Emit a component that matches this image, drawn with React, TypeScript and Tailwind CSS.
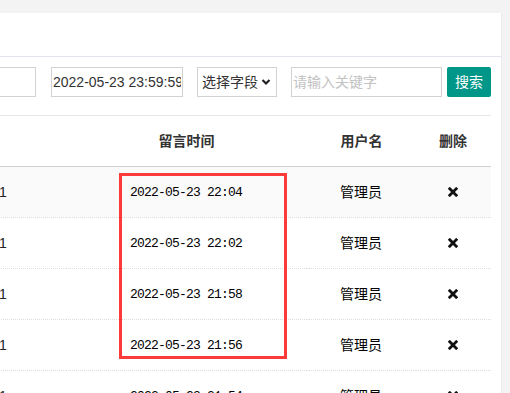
import React from "react";

type Row = { id: string; time: string; user: string };

const rows: Row[] = [
  { id: "1", time: "2022-05-23 22:04", user: "管理员" },
  { id: "1", time: "2022-05-23 22:02", user: "管理员" },
  { id: "1", time: "2022-05-23 21:58", user: "管理员" },
  { id: "1", time: "2022-05-23 21:56", user: "管理员" },
  { id: "1", time: "2022-05-23 21:54", user: "管理员" },
];

const sans = "font-['Liberation_Sans','Noto_Sans_CJK_SC',sans-serif]";

const CloseIcon = () => (
  <svg width="10" height="10" viewBox="0 0 10 10">
    <path d="M1.8 1.8 L8.2 8.2 M8.2 1.8 L1.8 8.2" stroke="#111" strokeWidth="2.8" strokeLinecap="square" />
  </svg>
);

const Chevron = () => (
  <svg width="10" height="8" viewBox="0 0 10 8">
    <path d="M1.5 2 L5 5.5 L8.5 2" stroke="#222" strokeWidth="2.2" fill="none" />
  </svg>
);

const App: React.FC = () => {
  return (
    <div className={`relative w-[510px] h-[393px] overflow-hidden bg-[#f3f3f3] pt-[13px] ${sans}`}>
      <div className="ml-[-200px] mr-[8px] h-[400px] bg-white border-r border-[#ececec]">
        {/* Card header */}
        <div className="h-[44px] border-b border-[#e3e3f0]" />

        {/* Search toolbar */}
        <div className="flex justify-end items-center pt-[10px] pr-[10px] text-[14px] text-[#333]">
          <input
            readOnly
            className="w-[132px] h-[30px] border border-[#d2d2d2] outline-none"
          />
          <input
            readOnly
            value="2022-05-23 23:59:59"
            className="ml-[15px] w-[132px] h-[30px] border border-[#d2d2d2] px-[1px] outline-none"
          />
          <div className="ml-[14px] w-[80px] h-[30px] border border-[#d2d2d2] flex items-center gap-[3px] pl-[4px]">
            <span>选择字段</span>
            <Chevron />
          </div>
          <input
            readOnly
            placeholder="请输入关键字"
            className="ml-[14px] w-[151px] h-[30px] border border-[#d2d2d2] px-[1px] outline-none placeholder:text-[#c2c2c2]"
          />
          <button className="ml-[5px] w-[44px] h-[30px] rounded-[2px] bg-[#009688] text-white text-[14px]">
            搜索
          </button>
        </div>

        {/* Table */}
        <div className="mt-[18px] mr-[10px] border-t border-[#e6e6e6] text-[14px] text-[#222]">
          <div className="flex justify-end h-[51px] border-b border-[#cfcfcf] font-bold text-[#333] items-center">
            <div className="w-[122px]" />
            <div className="w-[243px] text-center">留言时间</div>
            <div className="w-[107px] text-center">用户名</div>
            <div className="w-[76px] text-center">删除</div>
          </div>
          {rows.map((r, i) => (
            <div key={i} className={`flex justify-end h-[51px] ${i === 0 ? "bg-[#fafafa]" : ""}`}>
              <div className="w-[122px] flex items-center justify-center border-b border-dotted border-[#dcdcdc] mr-[1px]">
                {r.id}
              </div>
              <div className="w-[242px] flex items-center justify-center pt-[1px] border-b border-dotted border-[#dcdcdc] mr-[1px] font-['Liberation_Mono',monospace] text-[13px] tracking-[-0.8px] text-black">
                {r.time}
              </div>
              <div className="w-[106px] flex items-center justify-center border-b border-dotted border-[#dcdcdc] mr-[1px] text-black">
                {r.user}
              </div>
              <div className="w-[76px] flex items-center justify-center border-b border-dotted border-[#dcdcdc]">
                <CloseIcon />
              </div>
            </div>
          ))}
        </div>
      </div>

      {/* Red annotation box */}
      <div className="absolute left-[119px] top-[173px] w-[168px] h-[186px] border-[3px] border-[#fb3a3a]" />
    </div>
  );
};

export default App;
